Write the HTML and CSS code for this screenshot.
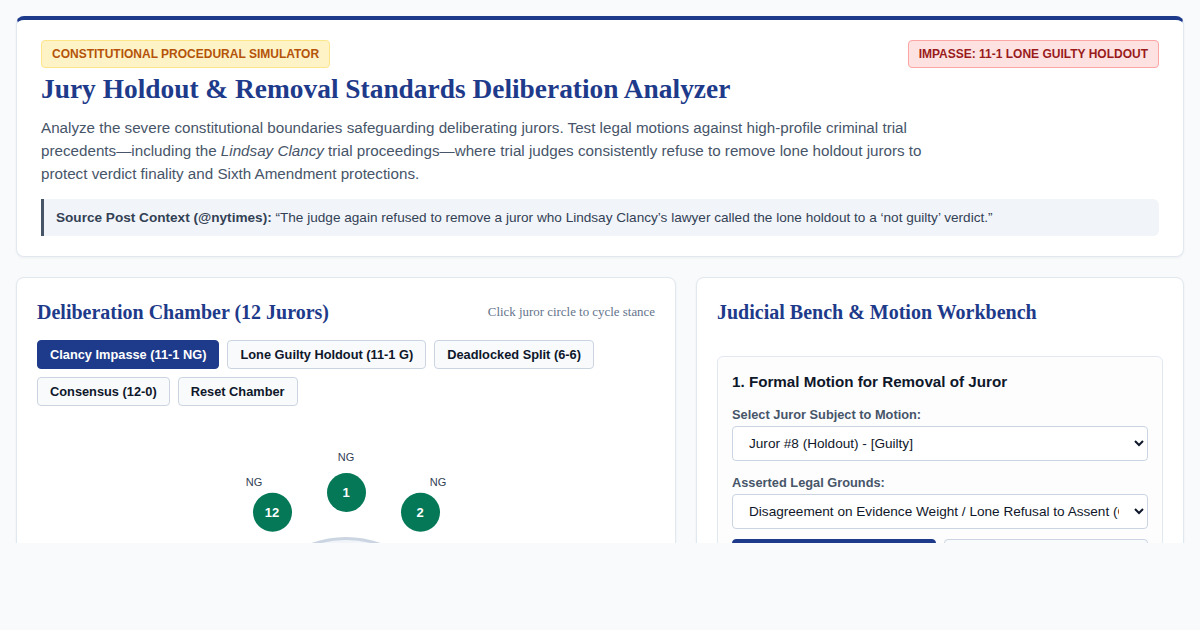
FILE: index.html
```html
<!DOCTYPE html>
<html lang="en">
<head>
<meta charset="UTF-8">
<meta name="viewport" content="width=device-width, initial-scale=1.0">
<title>Jury Holdout &amp; Removal Standards Deliberation Analyzer</title>
<link rel="stylesheet" href="styles.css">
</head>
<body>

<div class="screen">
<div class="page">
    <header class="hero">
        <div class="hero-top">
            <span class="badge badge-sim">Constitutional Procedural Simulator</span>
            <span class="badge badge-status" id="statusBadge">Impasse: 11-1 Lone Guilty Holdout</span>
        </div>
        <h1>Jury Holdout &amp; Removal Standards Deliberation Analyzer</h1>
        <p class="lead">Analyze the severe constitutional boundaries safeguarding deliberating jurors. Test legal motions against high-profile criminal trial precedents—including the <em>Lindsay Clancy</em> trial proceedings—where trial judges consistently refuse to remove lone holdout jurors to protect verdict finality and Sixth Amendment protections.</p>
        <div class="source">
            <strong>Source Post Context (@nytimes):</strong> “The judge again refused to remove a juror who Lindsay Clancy’s lawyer called the lone holdout to a ‘not guilty’ verdict.”
        </div>
    </header>

    <div class="columns">
        <section class="panel">
            <div class="panel-head">
                <h2>Deliberation Chamber (12 Jurors)</h2>
                <span class="hint">Click juror circle to cycle stance</span>
            </div>
            <div class="presets">
                <button class="preset active">Clancy Impasse (11-1 NG)</button>
                <button class="preset">Lone Guilty Holdout (11-1 G)</button>
                <button class="preset">Deadlocked Split (6-6)</button>
                <button class="preset">Consensus (12-0)</button>
                <button class="preset">Reset Chamber</button>
            </div>
            <div class="chamber" id="chamber">
                <div class="table"></div>
            </div>
        </section>

        <section class="panel">
            <div class="panel-head bench-head">
                <h2>Judicial Bench &amp; Motion Workbench</h2>
            </div>
            <div class="motion-box">
                <h3>1. Formal Motion for Removal of Juror</h3>
                <label for="jurorSelect">Select Juror Subject to Motion:</label>
                <select id="jurorSelect">
                    <option>Juror #8 (Holdout) - [Guilty]</option>
                </select>
                <label for="grounds">Asserted Legal Grounds:</label>
                <select id="grounds">
                    <option>Disagreement on Evidence Weight / Lone Refusal to Assent (Core Protection)</option>
                </select>
                <div class="motion-actions">
                    <button class="btn btn-primary">File Motion to Remove</button>
                    <button class="btn btn-light">Clear Record</button>
                </div>
            </div>
        </section>
    </div>
</div>
</div>

<script>
    const chamber = document.getElementById('chamber');
    // Clancy preset: everyone not guilty except juror 8
    const stances = ['NG','NG','NG','NG','NG','NG','NG','G','NG','NG','NG','NG'];

    stances.forEach(function(stance, i) {
        const angle = (i * 30) + 'deg';

        const label = document.createElement('span');
        label.className = 'seat-label';
        label.style.setProperty('--a', angle);
        label.textContent = stance;

        const juror = document.createElement('button');
        juror.className = 'juror ' + (stance === 'G' ? 'guilty' : 'not-guilty');
        juror.style.setProperty('--a', angle);
        juror.textContent = i + 1;

        chamber.appendChild(label);
        chamber.appendChild(juror);
    });
</script>

</body>
</html>
```

FILE: styles.css
```css
body {
    margin: 0;
    padding: 0;
    background: #f8fafc;
    font-family: "Liberation Sans", Arial, sans-serif;
    color: #0f172a;
}
.screen {
    height: 543px;
    overflow: hidden;
}
.page {
    padding: 16px;
}
.hero {
    background: #fff;
    border: 1px solid #e2e8f0;
    border-top: 4px solid #1e3a8a;
    border-radius: 8px;
    padding: 20px 24px;
    box-shadow: 0 1px 3px rgba(15, 23, 42, 0.05);
}
.hero-top {
    display: flex;
    justify-content: space-between;
    align-items: flex-start;
}
.badge {
    display: inline-block;
    font-size: 12px;
    font-weight: bold;
    text-transform: uppercase;
    padding: 6px 10px;
    line-height: 14px;
    border-radius: 4px;
}
.badge-sim {
    background: #fef3c7;
    border: 1px solid #fde68a;
    color: #b45309;
}
.badge-status {
    background: #fee2e2;
    border: 1px solid #fca5a5;
    color: #991b1b;
}
h1 {
    font-family: "Liberation Serif", "Times New Roman", serif;
    font-size: 27.4px;
    color: #1e3a8a;
    margin: 4px 0 10px;
    line-height: 34px;
}
.lead {
    font-size: 15.2px;
    line-height: 23.2px;
    color: #475569;
    max-width: 900px;
    margin: 0 0 13px;
}
.source {
    background: #f1f5f9;
    border-left: 3px solid #475569;
    border-radius: 0 6px 6px 0;
    padding: 10px 12px;
    font-size: 13.6px;
    line-height: 17px;
    color: #334155;
}
.columns {
    display: grid;
    grid-template-columns: 660px 1fr;
    gap: 20px;
    margin-top: 20px;
}
.panel {
    background: #fff;
    border: 1px solid #e2e8f0;
    border-radius: 8px;
    padding: 20px;
    box-shadow: 0 1px 3px rgba(15, 23, 42, 0.05);
}
.panel-head {
    display: flex;
    justify-content: space-between;
    align-items: center;
    height: 30px;
    margin-bottom: 12px;
}
.bench-head {
    margin-bottom: 28px;
}
h2 {
    font-family: "Liberation Serif", "Times New Roman", serif;
    font-size: 20px;
    color: #1e3a8a;
    margin: 0;
}
.hint {
    font-family: "Liberation Serif", "Times New Roman", serif;
    font-size: 12.9px;
    color: #64748b;
}
.presets {
    display: flex;
    flex-wrap: wrap;
    gap: 8px;
}
.preset {
    font-family: "Liberation Sans", Arial, sans-serif;
    font-size: 12.8px;
    font-weight: bold;
    line-height: 15px;
    padding: 6px 12px;
    background: #f8fafc;
    border: 1px solid #cbd5e1;
    border-radius: 4px;
    color: #0f172a;
    cursor: pointer;
}
.preset.active {
    background: #1e3a8a;
    border-color: #1e3a8a;
    color: #fff;
}
.chamber {
    position: relative;
    height: 380px;
    margin-top: 16px;
}
.table {
    position: absolute;
    left: 50%;
    top: 219px;
    width: 208px;
    height: 208px;
    margin: -104px 0 0 -104px;
    border: 3px solid #cbd5e1;
    border-radius: 50%;
    background: #f1f5f9;
    box-sizing: border-box;
}
.juror {
    position: absolute;
    left: 50%;
    top: 219px;
    width: 39px;
    height: 39px;
    margin: -19.5px 0 0 -19.5px;
    border: none;
    border-radius: 50%;
    font-family: "Liberation Sans", Arial, sans-serif;
    font-size: 13px;
    font-weight: bold;
    color: #fff;
    padding: 0;
    cursor: pointer;
    transform: rotate(var(--a)) translateY(-148px) rotate(calc(-1 * var(--a)));
}
.juror.not-guilty {
    background: #047857;
}
.juror.guilty {
    background: #b91c1c;
}
.seat-label {
    position: absolute;
    left: 50%;
    top: 219px;
    width: 30px;
    height: 14px;
    margin: -7px 0 0 -15px;
    text-align: center;
    font-size: 11px;
    line-height: 14px;
    color: #334155;
    transform: rotate(var(--a)) translateY(-184px) rotate(calc(-1 * var(--a)));
}
.motion-box {
    border: 1px solid #e2e8f0;
    border-radius: 6px;
    padding: 14px;
    background: #fdfdfe;
}
h3 {
    font-size: 15.2px;
    margin: 2px 0 17px;
    color: #0f172a;
}
label {
    display: block;
    font-size: 12.8px;
    font-weight: bold;
    color: #475569;
    margin-bottom: 4px;
}
select {
    display: block;
    width: 100%;
    font-family: "Liberation Sans", Arial, sans-serif;
    font-size: 13.6px;
    padding: 8px 12px;
    height: 35px;
    border: 1px solid #cbd5e1;
    border-radius: 4px;
    background: #fff;
    color: #0f172a;
    margin-bottom: 14px;
}
.motion-actions {
    display: grid;
    grid-template-columns: 1fr 1fr;
    gap: 8px;
    margin-top: -4px;
}
.btn {
    font-family: "Liberation Sans", Arial, sans-serif;
    font-size: 13px;
    font-weight: bold;
    padding: 9px 12px;
    border-radius: 4px;
    cursor: pointer;
}
.btn-primary {
    background: #1e3a8a;
    border: 1px solid #1e3a8a;
    color: #fff;
}
.btn-light {
    background: #f8fafc;
    border: 1px solid #cbd5e1;
    color: #0f172a;
}
```
